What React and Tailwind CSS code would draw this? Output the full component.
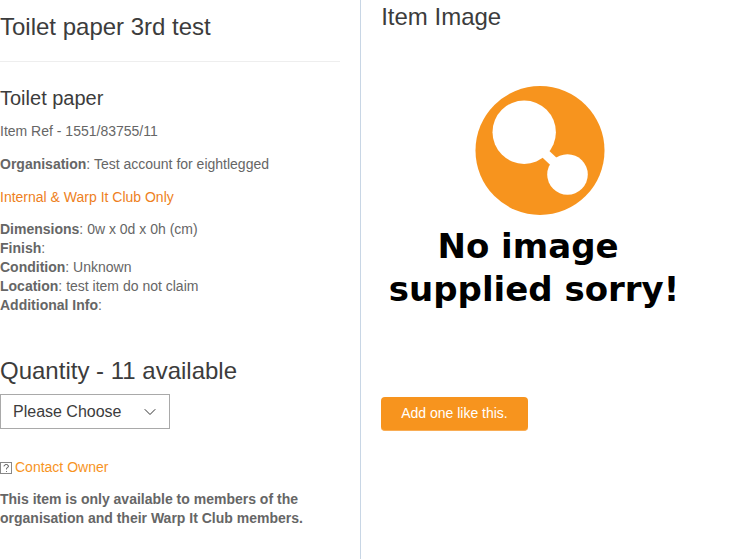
import { useState } from "react";
import { ChevronDown } from "lucide-react";

const details = [
  { label: "Dimensions", value: "0w x 0d x 0h (cm)" },
  { label: "Finish", value: "" },
  { label: "Condition", value: "Unknown" },
  { label: "Location", value: "test item do not claim" },
  { label: "Additional Info", value: "" },
];

const available = 11;

const NoImage = () => (
  <svg
    className="block w-[300px] h-[300px]"
    viewBox="0 0 300 300"
    role="img"
    aria-label="No image supplied sorry!"
  >
    <circle cx="159" cy="99.5" r="64.5" fill="#f7941e" />
    <g fill="#fff">
      <circle cx="143.2" cy="81.2" r="31.7" />
      <circle cx="186.5" cy="123.5" r="20.3" />
    </g>
    <path d="M155 94 L180 117.5" stroke="#fff" strokeWidth="9.5" />
    <g
      className="font-['DejaVu_Sans',sans-serif] font-bold text-[34px]"
      textAnchor="middle"
      fill="#000"
    >
      <text x="147" y="207">No image</text>
      <text x="153" y="250">supplied sorry!</text>
    </g>
  </svg>
);

const App = () => {
  const [quantity, setQuantity] = useState("");

  return (
    <main className="grid grid-cols-[49fr_51fr] min-h-screen bg-white font-['Liberation_Sans',Arial,sans-serif] text-sm leading-[19px] text-[#666]">
      {/* Item details */}
      <section className="pt-[13px] pr-5 pb-8 border-r border-[#c8d6e5]">
        <h1 className="text-2xl leading-7 text-[#3c3c3c]">Toilet paper 3rd test</h1>
        <hr className="mt-5 border-[#eee]" />

        <h2 className="mt-6 text-xl leading-6 text-[#3c3c3c]">Toilet paper</h2>
        <p className="mt-3">Item Ref - 1551/83755/11</p>
        <p className="mt-[14px]">
          <strong>Organisation</strong>: Test account for eightlegged
        </p>
        <p className="mt-[14px] text-[#ee7f22]">Internal &amp; Warp It Club Only</p>

        <ul className="mt-[13px]">
          {details.map((item) => (
            <li key={item.label}>
              <strong>{item.label}</strong>: {item.value}
            </li>
          ))}
        </ul>

        <label htmlFor="quantity" className="block mt-[42px] text-2xl leading-7 text-[#3c3c3c]">
          Quantity - {available} available
        </label>
        <div className="relative w-[170px] mt-[9px]">
          <select
            id="quantity"
            value={quantity}
            onChange={(e) => setQuantity(e.target.value)}
            className="block w-full h-[35px] pl-3 pr-8 appearance-none bg-white border border-[#a9a9a9] text-base text-[#3c3c3c]"
          >
            <option value="">Please Choose</option>
            {Array.from({ length: available }, (_, i) => (
              <option key={i} value={i + 1}>
                {i + 1}
              </option>
            ))}
          </select>
          <ChevronDown
            className="absolute right-[10px] top-[8px] pointer-events-none text-[#333]"
            size={20}
            strokeWidth={1.2}
          />
        </div>

        {/* Contact Owner */}
        <a href="#contact" className="flex w-fit items-center gap-[3px] mt-[29px] text-[#f7941e]">
          <svg className="w-3 h-3" viewBox="0 0 12 12" fill="none" stroke="#888" aria-hidden="true">
            <rect x="0.5" y="0.5" width="11" height="11" />
            <path d="M4 4.5V3.5H5V2.5H7.5V3.5H8.5V5H7.5V6H6.5V7.5M6 9.5H7" stroke="#777" />
          </svg>
          Contact Owner
        </a>

        <p className="mt-[13px] font-bold">
          This item is only available to members of the organisation and their Warp It Club members.
        </p>
      </section>

      {/* Item image */}
      <section className="pt-[3px] pl-5 pb-8">
        <h2 className="text-2xl leading-7 text-[#3c3c3c]">Item Image</h2>
        <div className="mt-5 mb-[46px]">
          <NoImage />
        </div>
        <button
          type="button"
          className="h-[34px] px-5 rounded-sm bg-[#f7941e] border-b border-[#f9ad55] text-white"
        >
          Add one like this.
        </button>
      </section>
    </main>
  );
};

export default App;
